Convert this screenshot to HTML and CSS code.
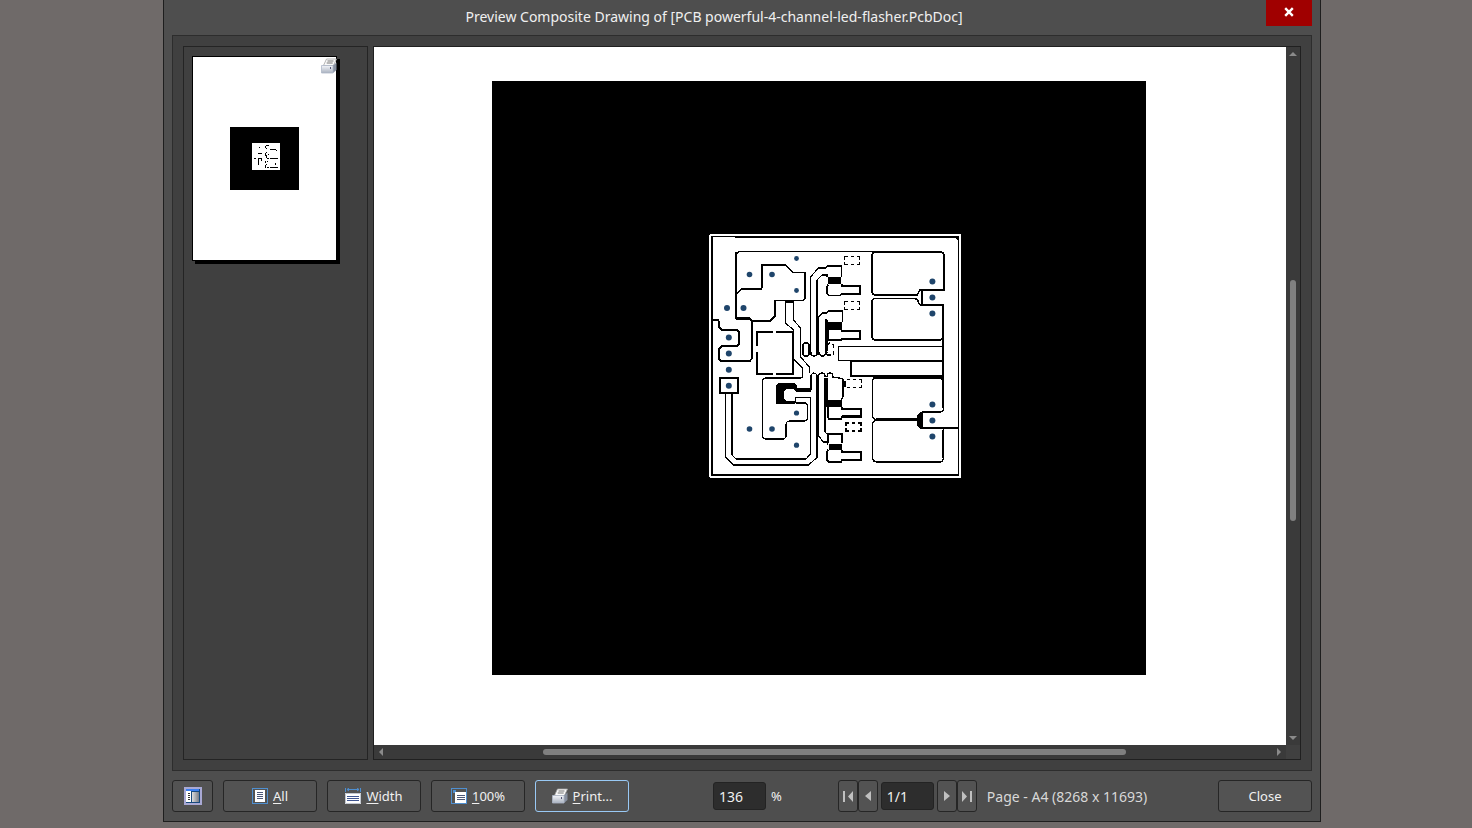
FILE: index.html
```
<!DOCTYPE html>
<html lang="en">
<head>
    <meta charset="UTF-8">
    <meta name="viewport" content="width=device-width, initial-scale=1.0">
    <title>Preview Composite Drawing</title>
    <link rel="stylesheet" href="styles.css">
</head>
<body>
    <div class="window">
        <div class="titlebar">
            <h1>Preview Composite Drawing of [PCB powerful-4-channel-led-flasher.PcbDoc]</h1>
            <button class="close-x" aria-label="Close window">
                <svg width="10" height="10" viewBox="0 0 10 10"><path d="M1.2 1.2L8.8 8.8M8.8 1.2L1.2 8.8" stroke="#fff" stroke-width="2.4"/></svg>
            </button>
        </div>

        <div class="panel">
            <div class="thumbs">
                <div class="sheet">
                    <svg class="sheet-print" width="16" height="16" viewBox="0 0 16 16"><use href="#printer"/></svg>
                    <svg class="sheet-art" width="69" height="63" viewBox="0 0 69 63" shape-rendering="crispEdges">
                        <rect width="69" height="63"/>
                        <rect x="22" y="16" width="28" height="27" fill="#fff"/>
                        <path d="M29 20.5h1M28 26.5h4M24 31.5h2M28 31.5h4M28.5 32v6M31.5 32v2M36 18.5h3M35.5 19v2M36 21.5h1M40 22.5h6M46.5 23v1M36 25.5h1M35.5 26v3M38 27.5h1M36.5 28v3M37 31.5h2M40 31.5h8M35.5 34v2M37 34.5h1M36 37.5h1M35.5 38v3M37 40.5h2M40 40.5h8M45.5 36v2" stroke="#000"/>
                    </svg>
                </div>
            </div>

            <div class="viewer">
                <div class="canvas">
                    <svg class="board" width="654" height="594" viewBox="492 81 654 594" shape-rendering="crispEdges">
                        <rect x="492" y="81" width="654" height="594"/>
                        <!-- board edge -->
                        <path d="M710 234h250l1 1v242l-1 1h-250l-1-1v-242z" fill="#fff"/>
                        <path d="M711 236h24v1h-22v237h245v-233l-3-3h-220v-2h222l2 2v238h-248z"/>

                        <g fill="none" stroke="#000" stroke-width="1.5">
                            <!-- left copper areas -->
                            <path d="M940 251.500H740q-4 1-4 4V318h13l3 3v37l-2 3h-29l-2-2V349l3-3h15l2-2v-12l-2-2h-15l-3-3v-5l-1-2h-5" />
                            <path d="M737 293l5-4h19l1-2v-22h23l8 7.500h12V298l-2 2.500h-28V316l-5 5h-17l-4-3h-12" />
                            <path d="M785.500 301v22l8 7v29l9 9v9l-2 1H766q-3.500 0-3.500 3v55q0 3 3.500 3h18l2-2v-12q0-4 4-4h15q2.500-1 2.500-3v-12q0-3-2.500-3h-9" stroke-width="1.200"/>
                            <path d="M793.500 301v19l7 8v29l9 10v6M786 302h8" stroke-width="1.200"/>
                            <path d="M736 252v66M752 320v39M720 361h30M736 319h14M766 378h34M766 439h18" stroke-width="2"/>
                            <path d="M732 393v62l4 4h70l4.500-5v-56.500h-15v5" stroke-width="1.200"/>
                            <path d="M725.500 393v64l8 8h75l9-8v-82" stroke-width="1.200"/>
                            <path d="M720 378h18v15h-18zM736 459h70M817 375v82M811 375v15" stroke-width="2"/>
                            <!-- controller outline -->
                            <path d="M757 346v-14h16M776 332h18M757 352v22h16M776 374h17v-42" stroke-width="2"/>

                            <!-- upper traces -->
                            <path d="M810.500 355v-78l8-9h7l2-2h14v11M827 277v-2h-5l-5 5v75M818.500 355v-38l4-4h4l2-2h14v11" stroke-width="1.200"/>
                            <path d="M817 280v75M826 319v36" stroke-width="2"/>
                            <path d="M803 346q0-3 3-3t3 3v7q0 3-3 3t-3-3zM811 352q0 4 3 4t3-4M819.500 352q0 4 3 4t3-4M827 352v1" />
                            <path d="M827.500 346q0-3 3-3t3 3v9h-6z" stroke-dasharray="4 3"/>
                            <!-- lower traces -->
                            <path d="M811 378q0-5 3-5t3 5M818.500 437v-60q0-4 3.500-4t3 4M827 377q0-4 3-4t3 4q7 1 10 2v18l-2 3M818.500 436l5 6h4v3M825 378v54l3 3" stroke-width="1.200"/>
                            <path d="M825 378v54" stroke-width="2"/>

                            <!-- transistor pads -->
                            <path d="M828 285q-1 1-1 3v5l2 2.500h11l2-1.500h18v-8h-18v-2M828 330v8l1 2h12l1-1h18v-8h-18v-1" />
                            <path d="M828 407v10l1 2h12l1-2h19v-8h-19v-2M842 443v-9h-14v9M828 450q-1 1-1 3v7l2 2h12l1-2h19v-8h-19v-2" />
                            <path d="M842 286h18M842 331h18M842 416h19M859.500 286v8M861 409v8M861 452v8" stroke-width="2"/>

                            <!-- output bars -->
                            <path d="M943 346.500H838.500v14H943" stroke-width="1"/>
                            <path d="M943 361H851v15h92" stroke-width="2"/>

                            <!-- output copper areas -->
                            <path d="M940 252h-64q-4 0-4 4v35q0 4 4 4h41l3-5h24v-34q0-4-4-4M876 298.500h39q3 1 4 5l2 1.500h22v31q0 4-4 4h-63q-4 0-4-4v-34q0-3.500 4-3.500" />
                            <path d="M876 378h63q4 0 4 4M943.500 338v70q0 4-4 4H922M876 378q-3.500 0-3.500 4v33q0 4 4 5-4 1-4 5v32q0 5 5 5h62q4 0 4-5v-29M920 428h38" />
                            <path d="M875 252h66M875 295h42M920 290h24M922 290v15M920 305h24M943 305v103M875 340h64M872 257v33M872 303v33M875 378h64M876 462h63M943 430v28M920 428h23" stroke-width="2"/>
                            <path d="M876 419.500h44" stroke-width="3"/>
                            <path d="M873 377.500h70" stroke-width="3"/>
                        </g>

                        <!-- solid fills -->
                        <path d="M828 277h13v7h-13zM825 320h3v2h14v8h-14v18h-3zM825 378h3v22h14v7h-16zM829 444h13v6h-13zM843 381h3v6h-3zM920 412h3v16h-4l-2-3v-9z"/>
                        <path d="M779 383h15l3 2v3h14v4h-15l-2-3h-8l-2 2v7l2 3h9v3h-19v-19z"/>
                        <path d="M954 236h5v5h-1l-3-3z"/>

                        <!-- resistor outlines -->
                        <g fill="none" stroke="#000">
                            <path d="M844.500 260v-3.500h3.500M851 256.500h3M857 256.500h2.500v3M844.500 262v2.500h3.500M851 264.500h3M857 264.500h2.500v-3"/>
                            <path d="M844.500 305v-3.500h3.500M851 301.500h3M857 301.500h2.500v3M844.500 307v2.500h3.500M851 309.500h3M857 309.500h2.500v-3"/>
                            <path d="M846.500 379.500h3M853 379.500h3M859 379.500h2.500v3M846.500 387.500h3M853 387.500h3M859 387.500h2.500v-3"/>
                            <path d="M846 426v-3h3M852 423h3M858 423h3v3M846 428v3h3M852 431h3M858 431h3v-3" stroke-width="1.500"/>
                        </g>

                        <!-- drill holes -->
                        <g fill="#1f456b" shape-rendering="auto">
                            <circle cx="749.500" cy="274.500" r="2.800"/>
                            <circle cx="772" cy="274.500" r="2.800"/>
                            <circle cx="796.500" cy="258.500" r="2.400"/>
                            <circle cx="796.500" cy="290.500" r="2.400"/>
                            <circle cx="727" cy="308" r="3"/>
                            <circle cx="743.500" cy="308" r="3"/>
                            <circle cx="728.800" cy="337.500" r="3"/>
                            <circle cx="728.800" cy="353.500" r="3"/>
                            <circle cx="728.800" cy="369.700" r="3"/>
                            <circle cx="728.800" cy="385.700" r="3"/>
                            <circle cx="796.500" cy="413" r="2.600"/>
                            <circle cx="749.500" cy="429" r="2.800"/>
                            <circle cx="772" cy="429" r="2.800"/>
                            <circle cx="796.500" cy="445.200" r="2.600"/>
                            <circle cx="932.400" cy="281.500" r="3"/>
                            <circle cx="932.400" cy="297.500" r="3"/>
                            <circle cx="932.400" cy="313.500" r="3"/>
                            <circle cx="932.400" cy="404.500" r="3"/>
                            <circle cx="932.400" cy="420.500" r="3"/>
                            <circle cx="932.400" cy="436.500" r="3"/>
                        </g>
                    </svg>
                </div>
                <div class="scroll scroll-v">
                    <button aria-label="Scroll up"><svg width="8" height="4" viewBox="0 0 8 4"><path d="M0 4L4 0L8 4z"/></svg></button>
                    <div class="track"><div class="thumb"></div></div>
                    <button aria-label="Scroll down"><svg width="8" height="4" viewBox="0 0 8 4"><path d="M0 0L4 4L8 0z"/></svg></button>
                </div>
                <div class="scroll scroll-h">
                    <button aria-label="Scroll left"><svg width="4" height="8" viewBox="0 0 4 8"><path d="M4 0L0 4L4 8z"/></svg></button>
                    <div class="track"><div class="thumb"></div></div>
                    <button aria-label="Scroll right"><svg width="4" height="8" viewBox="0 0 4 8"><path d="M0 0L4 4L0 8z"/></svg></button>
                </div>
                <div class="corner"></div>
            </div>
        </div>

        <div class="toolbar">
            <button class="btn btn-icon" aria-label="Toggle thumbnails">
                <svg width="18" height="18" viewBox="0 0 18 18">
                    <rect width="18" height="18" fill="#a9a9d4"/>
                    <rect x="2" y="2" width="14" height="14" fill="#17497c"/>
                    <rect x="2" y="2" width="13" height="2" fill="#3b7ff0"/>
                    <rect x="2" y="4" width="5" height="11" fill="#fff"/>
                    <path d="M4 6.500h2M4 8.500h2M4 10.500h2M4 12.500h2" stroke="#333"/>
                    <rect x="8" y="5" width="7" height="10" fill="url(#pane)"/>
                </svg>
            </button>
            <button class="btn">
                <svg width="16" height="16" viewBox="0 0 16 16">
                    <rect x=".5" y=".5" width="15" height="15" fill="none" stroke="#4f8fd0"/>
                    <rect x="3" y="2" width="10" height="12" fill="#fff"/>
                    <path d="M5 4.500h6M5 6.500h6M5 8.500h6M5 10.500h6" stroke="#4c5878"/>
                </svg>
                <span><u>A</u>ll</span>
            </button>
            <button class="btn">
                <svg width="16" height="16" viewBox="0 0 16 16">
                    <path d="M.5 0v4M15.500 0v4M2 1.500h12M4 0L2 1.500L4 3M12 0l2 1.500L12 3" fill="none" stroke="#4f8fd0"/>
                    <rect y="5" width="16" height="11" fill="#fff"/>
                    <path d="M.5 5.500h15v10h-15z" fill="none" stroke="#c3c8d0"/>
                    <path d="M2 8.500h12M2 10.500h12M2 12.500h12" stroke="#3f5590"/>
                </svg>
                <span><u>W</u>idth</span>
            </button>
            <button class="btn">
                <svg width="16" height="16" viewBox="0 0 16 16">
                    <rect x=".5" y=".5" width="15" height="15" fill="none" stroke="#4f8fd0"/>
                    <path d="M2 2h3v2h-1v1h-2z" fill="#4f8fd0"/>
                    <rect x="4" y="4" width="11" height="11" fill="#fff"/>
                    <path d="M6 7.500h8M6 9.500h8M6 11.500h8" stroke="#4c5878"/>
                </svg>
                <span><u>1</u>00%</span>
            </button>
            <button class="btn btn-default">
                <svg width="16" height="16" viewBox="0 0 16 16">
                    <defs>
                        <linearGradient id="pane"><stop stop-color="#ddd"/><stop offset="1" stop-color="#777c85"/></linearGradient>
                        <linearGradient id="body" x2="0" y2="1"><stop stop-color="#f4f6fa"/><stop offset="1" stop-color="#a9b1bf"/></linearGradient>
                        <g id="printer">
                            <path d="M5.500 1h10l-3 6.500h-10z" fill="#fafafa" stroke="#a2a2a2" stroke-width=".8"/>
                            <path d="M6.500 3h6M5.700 5h6" stroke="#777"/>
                            <path d="M12 7.500l3.500-3v7.500l-3.500 3z" fill="#8790a0"/>
                            <path d="M.5 7.500h11.500v7.500h-11.500z" fill="url(#body)" stroke="#aeb8c8" stroke-width=".8"/>
                            <path d="M9.500 9v2" stroke="#557"/>
                        </g>
                    </defs>
                    <use href="#printer"/>
                </svg>
                <span><u>P</u>rint...</span>
            </button>

            <div class="zoom">
                <input type="text" id="zoom" value="136">
                <label for="zoom">%</label>
            </div>

            <div class="pager">
                <button class="btn btn-nav" aria-label="First page"><svg width="10" height="11" viewBox="0 0 10 11"><path d="M0 0h2v11h-2zM10 0v11L5 5.500z"/></svg></button>
                <button class="btn btn-nav" aria-label="Previous page"><svg width="6" height="10" viewBox="0 0 6 10"><path d="M6 0v10L0 5z"/></svg></button>
                <input type="text" id="page" value="1/1" aria-label="Page">
                <button class="btn btn-nav" aria-label="Next page"><svg width="6" height="10" viewBox="0 0 6 10"><path d="M0 0v10L6 5z"/></svg></button>
                <button class="btn btn-nav" aria-label="Last page"><svg width="10" height="11" viewBox="0 0 10 11"><path d="M8 0h2v11h-2zM0 0v11L5 5.500z"/></svg></button>
            </div>
            <span class="page-info">Page - A4 (8268 x 11693)</span>

            <button class="btn btn-close">Close</button>
        </div>
    </div>
</body>
</html>
```
FILE: styles.css
```
* {
    box-sizing: border-box;
}
body {
    margin: 0;
    height: 100vh;
    padding: 0 151px 6px 163px;
    background-color: #6f6a69;
    font-family: "Noto Sans", "Open Sans", sans-serif;
    font-size: 13px;
    color: #f0f0f0;
}
button, input {
    font: inherit;
    color: inherit;
}
button {
    padding: 0;
    border: none;
    background: none;
    cursor: pointer;
}
svg {
    display: block;
    flex-shrink: 0;
}
.window {
    display: flex;
    flex-direction: column;
    height: 100%;
    padding: 0 8px;
    background-color: #4e4e4e;
    border: 1px solid #1e1e1e;
    border-top: none;
}

/* title bar */
.titlebar {
    display: grid;
    grid-template-columns: 46px 1fr 46px;
    height: 35px;
}
.titlebar h1 {
    grid-column: 2;
    margin: 0;
    font-size: 14px;
    font-weight: normal;
    line-height: 34px;
    text-align: center;
    padding-right: 56px;
}
.close-x {
    display: flex;
    align-items: center;
    justify-content: center;
    height: 26px;
    padding-bottom: 3px;
    background-color: #a00000;
}

/* thumbnails and viewer */
.panel {
    display: flex;
    flex: 1;
    gap: 5px;
    min-height: 0;
    padding: 10px;
    background-color: #404040;
    border: 1px solid #2d2d2d;
}
.thumbs {
    width: 185px;
    padding: 9px 8px;
    border: 1px solid #242424;
}
.sheet {
    position: relative;
    width: 145px;
    height: 205px;
    padding: 70px 37px;
    background-color: #fff;
    border: 1px solid #000;
    box-shadow: 3px 3px 0 #000;
}
.sheet-print {
    position: absolute;
    top: 1px;
    right: -1px;
}
.viewer {
    display: grid;
    grid-template-columns: 1fr 14px;
    grid-template-rows: 1fr 14px;
    flex: 1;
    min-width: 0;
    border: 1px solid #202020;
}
.canvas {
    padding: 34px 0 0 118px;
    min-width: 0;
    min-height: 0;
    overflow: hidden;
    background-color: #fff;
}
.scroll {
    display: flex;
    background-color: #3a3a3a;
}
.scroll button {
    display: flex;
    align-items: center;
    justify-content: center;
    width: 14px;
    height: 14px;
}
.scroll svg {
    fill: #8a8a8a;
}
.scroll-v {
    flex-direction: column;
}
.track {
    display: flex;
    flex: 1;
}
.thumb {
    background-color: #808080;
    border-radius: 3px;
}
.scroll-v .track {
    padding-left: 4px;
    align-items: flex-start;
}
.scroll-v .thumb {
    width: 6px;
    height: 36%;
    margin-top: 219px;
}
.scroll-h .track {
    align-items: center;
}
.scroll-h .thumb {
    width: 66%;
    height: 6px;
    margin-left: 155px;
}
.corner {
    background-color: #404040;
}

/* bottom toolbar */
.toolbar {
    display: flex;
    align-items: center;
    gap: 10px;
    height: 50px;
}
.btn {
    display: flex;
    align-items: center;
    justify-content: center;
    gap: 5px;
    width: 94px;
    height: 32px;
    background-color: #535353;
    border: 1px solid #262626;
    border-radius: 3px;
}
.btn:hover {
    background-color: #5c5c5c;
}
.btn u {
    text-underline-offset: 2px;
}
.btn-icon {
    width: 41px;
}
.btn-default {
    border-color: #99c9f5;
}
.btn-nav {
    width: 20px;
}
.btn-nav svg {
    fill: #c0c0c0;
}
.btn-close {
    margin-left: auto;
}
.toolbar input {
    width: 53px;
    height: 28px;
    padding: 0 5px;
    font-size: 14px;
    background-color: #2d2d2d;
    border: 1px solid #232323;
    border-radius: 3px;
}
.zoom {
    display: flex;
    align-items: center;
    gap: 5px;
    margin-left: 74px;
}
.pager {
    display: flex;
    align-items: center;
    margin-left: 46px;
}
.pager input {
    margin: 0 3px;
}
.page-info {
    font-size: 14px;
    color: #d8d8d8;
}
```
